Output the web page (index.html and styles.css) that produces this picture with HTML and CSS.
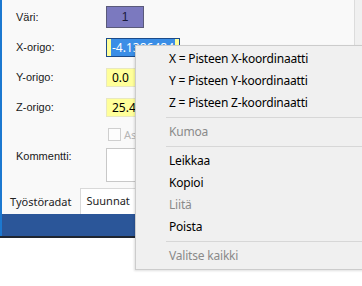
FILE: index.html
```html
<!doctype html>
<html lang="fi">
<head>
    <meta charset="utf-8">
    <title>Ominaisuudet</title>
    <link rel="stylesheet" href="styles.css">
</head>
<body>
    <div class="window">
        <div class="panel">
            <div class="row row-color">
                <span class="label">Väri:</span>
                <span class="color-box">1</span>
            </div>
            <div class="row">
                <span class="label">X-origo:</span>
                <span class="field field-focus"><span class="selected">-4.1386484</span></span>
            </div>
            <div class="row">
                <span class="label">Y-origo:</span>
                <span class="field">0.0</span>
            </div>
            <div class="row">
                <span class="label">Z-origo:</span>
                <span class="field">25.4</span>
            </div>
            <div class="row row-check">
                <span class="label"></span>
                <span class="checkbox"></span>
                <span class="check-text">Ass</span>
            </div>
            <div class="row row-comment">
                <span class="label">Kommentti:</span>
                <span class="comment"></span>
            </div>
            <div class="tabs">
                <span class="tab">Työstöradat</span>
                <span class="tab tab-active">Suunnat</span>
            </div>
            <div class="status-bar"></div>
        </div>
        <div class="side"></div>
    </div>

    <div class="context-menu">
        <div class="item">X = Pisteen X-koordinaatti</div>
        <div class="item">Y = Pisteen Y-koordinaatti</div>
        <div class="item">Z = Pisteen Z-koordinaatti</div>
        <div class="separator"></div>
        <div class="item disabled">Kumoa</div>
        <div class="separator"></div>
        <div class="item">Leikkaa</div>
        <div class="item">Kopioi</div>
        <div class="item disabled">Liitä</div>
        <div class="item">Poista</div>
        <div class="separator"></div>
        <div class="item disabled">Valitse kaikki</div>
    </div>
</body>
</html>
```

FILE: styles.css
```css
/* General styling */
body {
    margin: 0;
    padding: 0;
    background-color: #ffffff;
    font-family: 'Liberation Sans', Arial, sans-serif;
    font-size: 11px;
    color: #000000;
    width: 362px;
    height: 286px;
    overflow: hidden;
    position: relative;
}

/* Window behind the menu */
.window {
    display: flex;
    height: 238px;
    border-bottom: 2px solid #1f2530;
    box-sizing: border-box;
}

.panel {
    flex: 1;
    background-color: #f9f9f9;
    border-left: 2px solid #1c78d0;
    padding-top: 6px;
    display: flex;
    flex-direction: column;
}

.side {
    width: 7px;
    background-color: #f0f0f0;
    border-left: 1px solid #dcdcdc;
}

.row {
    display: flex;
    align-items: center;
    height: 20px;
    margin-bottom: 10px;
}

.label {
    width: 90px;
    padding-left: 14px;
    color: #1a1a1a;
}

.row-color {
    height: 22px;
    margin-bottom: 9px;
}

.color-box {
    width: 38px;
    height: 22px;
    box-sizing: border-box;
    background-color: #7b79bf;
    border: 1px solid #5a5a7a;
    display: flex;
    align-items: center;
    justify-content: center;
    font-size: 12px;
    color: #1a1a3a;
}

.field {
    width: 74px;
    height: 19px;
    box-sizing: border-box;
    background-color: #ffff9a;
    border: 1px solid #e8e8c0;
    padding-left: 5px;
    font-family: 'Noto Sans', sans-serif;
    font-size: 12px;
    line-height: 17px;
    overflow: hidden;
    white-space: nowrap;
}

.field-focus {
    border: 1px solid #1b4b8a;
    padding-left: 4px;
}

.selected {
    background-color: #3b8ee6;
    color: #ffffff;
    padding: 0 1px;
}

.row-check {
    height: 12px;
    margin-top: 1px;
    margin-bottom: 9px;
}

.checkbox {
    width: 11px;
    height: 11px;
    border: 1px solid #cfcfcf;
    background-color: #fdfdfd;
    margin-left: 2px;
}

.check-text {
    margin-left: 3px;
    color: #b5b5b5;
    font-family: 'Noto Sans', sans-serif;
    font-size: 11px;
}

.row-comment {
    align-items: flex-start;
    height: 34px;
    margin-top: -1px;
    margin-bottom: 6px;
}

.row-comment .label {
    padding-top: 2px;
}

.comment {
    width: 140px;
    height: 34px;
    box-sizing: border-box;
    background-color: #ffffff;
    border: 1px solid #c8c8c8;
}

/* Tabs */
.tabs {
    display: flex;
    align-items: flex-end;
    height: 26px;
    padding-left: 2px;
    font-family: 'Noto Sans', sans-serif;
    font-size: 11px;
}

.tab {
    height: 23px;
    line-height: 22px;
    padding: 0 6px;
    color: #222222;
}

.tab-active {
    height: 26px;
    line-height: 24px;
    background-color: #ffffff;
    border: 1px solid #d9d9d9;
    border-bottom: none;
    box-sizing: border-box;
    margin-left: 3px;
    padding: 0 5px;
}

.status-bar {
    flex: 1;
    background-color: #2b5699;
}

/* Context menu */
.context-menu {
    position: absolute;
    left: 135px;
    top: 45px;
    width: 240px;
    padding: 2px 0;
    background-color: #f0f0f0;
    border: 1px solid #cccccc;
    box-shadow: -1px 1px 2px rgba(0, 0, 0, 0.12);
    font-family: 'Noto Sans', sans-serif;
    font-size: 12px;
    letter-spacing: -0.2px;
    color: #000000;
}

.item {
    height: 22px;
    line-height: 22px;
    padding-left: 33px;
    white-space: nowrap;
}

.item.disabled {
    color: #8a8a8a;
}

.separator {
    height: 1px;
    margin: 3px 0 3px 30px;
    background-color: #d7d7d7;
}
```
